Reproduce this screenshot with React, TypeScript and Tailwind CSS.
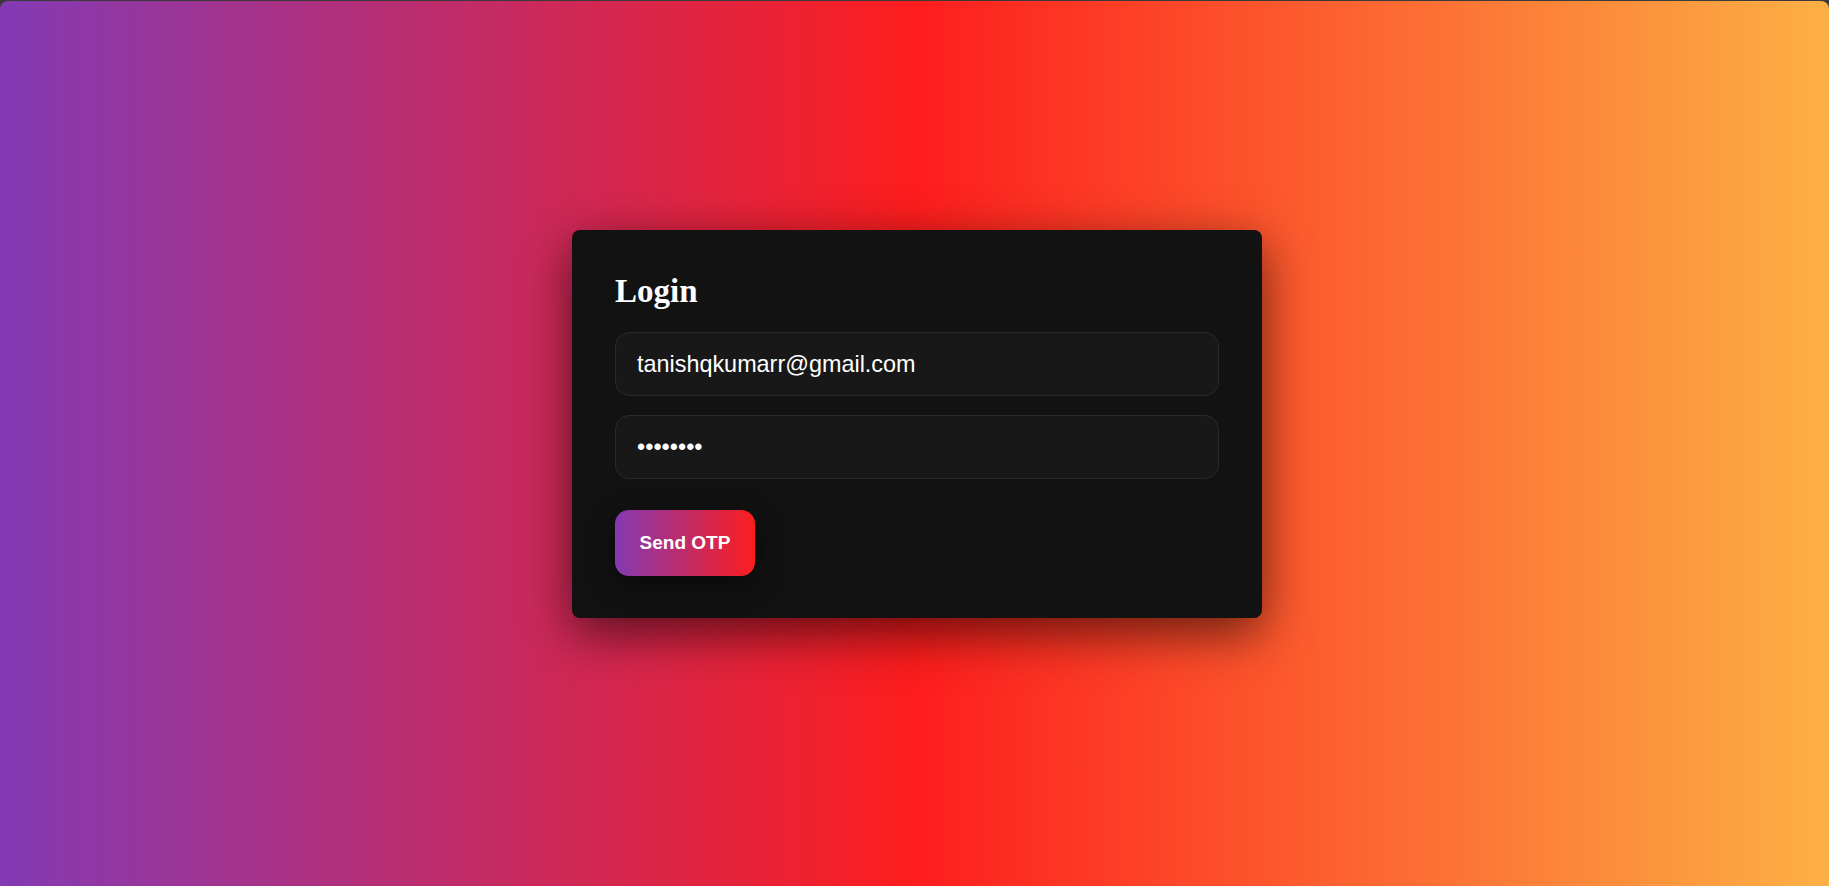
import React from "react";

export default function App() {
  return (
    <div className="h-screen w-full bg-[#3a3a3a] pt-px">
      <div className="flex h-full w-full items-center justify-center rounded-t-lg bg-[linear-gradient(to_right,#833ab4,#fd1d1d,#fcb045)] pb-[39px] pl-[5px]">
        <div className="w-[690px] rounded-lg bg-[#121212] px-[43px] pt-[43px] pb-[42px] shadow-[0_15px_50px_rgba(0,0,0,0.6)]">
          <h2 className="mb-[22px] font-['Liberation_Serif',serif] text-[33px] leading-[37px] font-bold text-white">
            Login
          </h2>
          <input
            type="email"
            defaultValue="tanishqkumarr@gmail.com"
            className="block h-[64px] w-full rounded-[14px] border border-[#2a2a2a] bg-[#181818] px-[21px] font-['Liberation_Sans',sans-serif] text-[23.4px] text-white outline-none"
          />
          <input
            type="password"
            defaultValue="12345678"
            className="mt-[19px] block h-[64px] w-full rounded-[14px] border border-[#2a2a2a] bg-[#181818] px-[21px] font-['Liberation_Sans',sans-serif] text-[23.4px] text-white outline-none"
          />
          <button className="mt-[31px] flex h-[66px] w-[140px] items-center justify-center rounded-[14px] bg-[linear-gradient(to_right,#833ab4,#fd1d1d)] font-['Liberation_Sans',sans-serif] text-[19px] font-bold text-white shadow-[0_8px_28px_rgba(0,0,0,0.55)]">
            Send OTP
          </button>
        </div>
      </div>
    </div>
  );
}
